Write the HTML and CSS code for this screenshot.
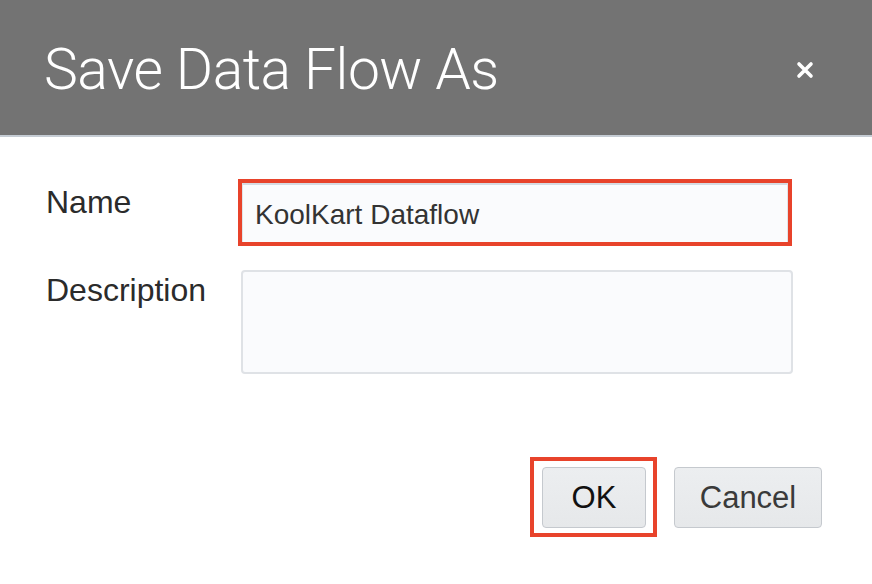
FILE: index.html
```html
<!DOCTYPE html>
<html lang="en">
<head>
<meta charset="utf-8">
<title>Save Data Flow As</title>
<link rel="stylesheet" href="styles.css">
</head>
<body>
<div class="dialog">
  <header class="header">
    <h1 class="title">Save Data Flow As</h1>
    <button class="close" aria-label="Close">
      <svg width="18" height="18" viewBox="0 0 18 18"><path d="M3 3 L15 15 M15 3 L3 15" stroke="#fff" stroke-width="3.6" stroke-linecap="round"/></svg>
    </button>
  </header>
  <div class="content">
    <div class="form">
      <label class="label label-name">Name</label>
      <div class="highlight">
        <div class="input">KoolKart Dataflow</div>
      </div>
      <label class="label label-desc">Description</label>
      <div class="textarea"></div>
    </div>
    <div class="actions">
      <div class="highlight highlight-btn">
        <button class="btn btn-ok">OK</button>
      </div>
      <button class="btn btn-cancel">Cancel</button>
    </div>
  </div>
</div>
</body>
</html>
```
FILE: styles.css
```css
* { box-sizing: border-box; }
html, body { margin: 0; padding: 0; background: #fff; }
body { font-family: "Liberation Sans", Arial, sans-serif; color: #2b2b2b; }
.dialog { width: 872px; height: 584px; display: flex; flex-direction: column; }
.header {
  height: 137px;
  background: #737373;
  border-bottom: 2px solid #c5ccd4;
  display: flex;
  align-items: center;
  justify-content: space-between;
  padding: 0 58px 0 44px;
}
.title {
  margin: 0;
  font-family: Roboto, "Liberation Sans", sans-serif;
  font-weight: 300;
  font-size: 57px;
  color: #fff;
  letter-spacing: -0.5px;
  padding-top: 3px;
}
.close { background: none; border: 0; padding: 0; width: 18px; height: 18px; display: flex; margin-top: 4px; }
.content { padding: 42px 50px 0 46px; display: flex; flex-direction: column; }
.form {
  display: grid;
  grid-template-columns: 192px 554px;
  row-gap: 24px;
}
.label { font-size: 32px; color: #2b2b2b; }
.label-name { padding-top: 5px; }
.label-desc { padding-top: 2px; }
.highlight { border: 4px solid #e8432b; }
.input {
  height: 59px;
  border-top: 2px solid #d6dbe2;
  border-left: 1px solid #e1e4e8;
  border-right: 1px solid #e1e4e8;
  background: #fafbfd;
  font-size: 28px;
  color: #333;
  padding: 14px 0 0 12px;
}
.textarea {
  margin-left: 3px;
  width: 552px;
  height: 104px;
  border: 2px solid #dfe2e6;
  border-radius: 4px;
  background: #fafbfd;
}
.actions {
  margin-top: 83px;
  display: flex;
  justify-content: flex-end;
  align-items: flex-start;
  gap: 17px;
}
.highlight-btn { padding: 6px 7px 5px 8px; }
.btn {
  height: 61px;
  border: 1px solid #c5c9ce;
  border-radius: 4px;
  background: linear-gradient(#eceef0, #e6e8ea);
  font-family: "Liberation Sans", Arial, sans-serif;
  font-size: 31px;
  color: #1e1e1e;
  padding: 0;
}
.btn-ok { width: 104px; color: #111; }
.btn-cancel { width: 148px; margin-top: 10px; color: #3a3a3a; }
```
